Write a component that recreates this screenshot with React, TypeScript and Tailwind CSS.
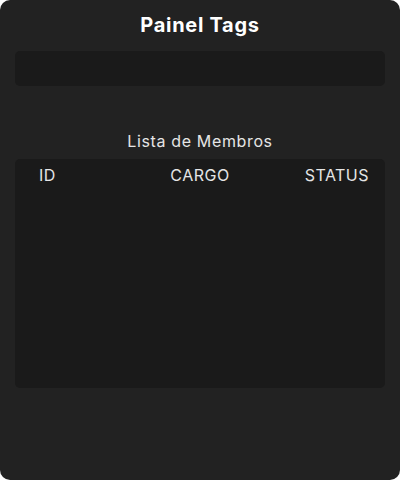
import React from 'react';

export default function App() {
  return (
    <div className="w-[400px] h-[480px] bg-white" style={{ fontFamily: 'Inter, "Open Sans", sans-serif' }}>
      <div className="w-full h-full bg-[#222222] rounded-[10px] px-[15px] pt-[12px] flex flex-col">
        <h1 className="text-center text-white font-bold text-[20px] leading-[26px] tracking-[0.035em]">Painel Tags</h1>
        <div className="mt-[13px] h-[35px] bg-[#1a1a1a] rounded-[5px]"></div>
        <p className="mt-[44px] text-center text-[#e5e5e5] text-[16px] leading-[22px] tracking-[0.04em]">Lista de Membros</p>
        <div className="mt-[7px] h-[229px] bg-[#1a1a1a] rounded-[5px]">
          <div className="grid grid-cols-3 px-[16px] pt-[6px] text-[16px] leading-[20px] text-[#e5e5e5] tracking-[0.03em]">
            <span className="pl-[8px]">ID</span>
            <span className="text-center">CARGO</span>
            <span className="text-right">STATUS</span>
          </div>
        </div>
      </div>
    </div>
  );
}
